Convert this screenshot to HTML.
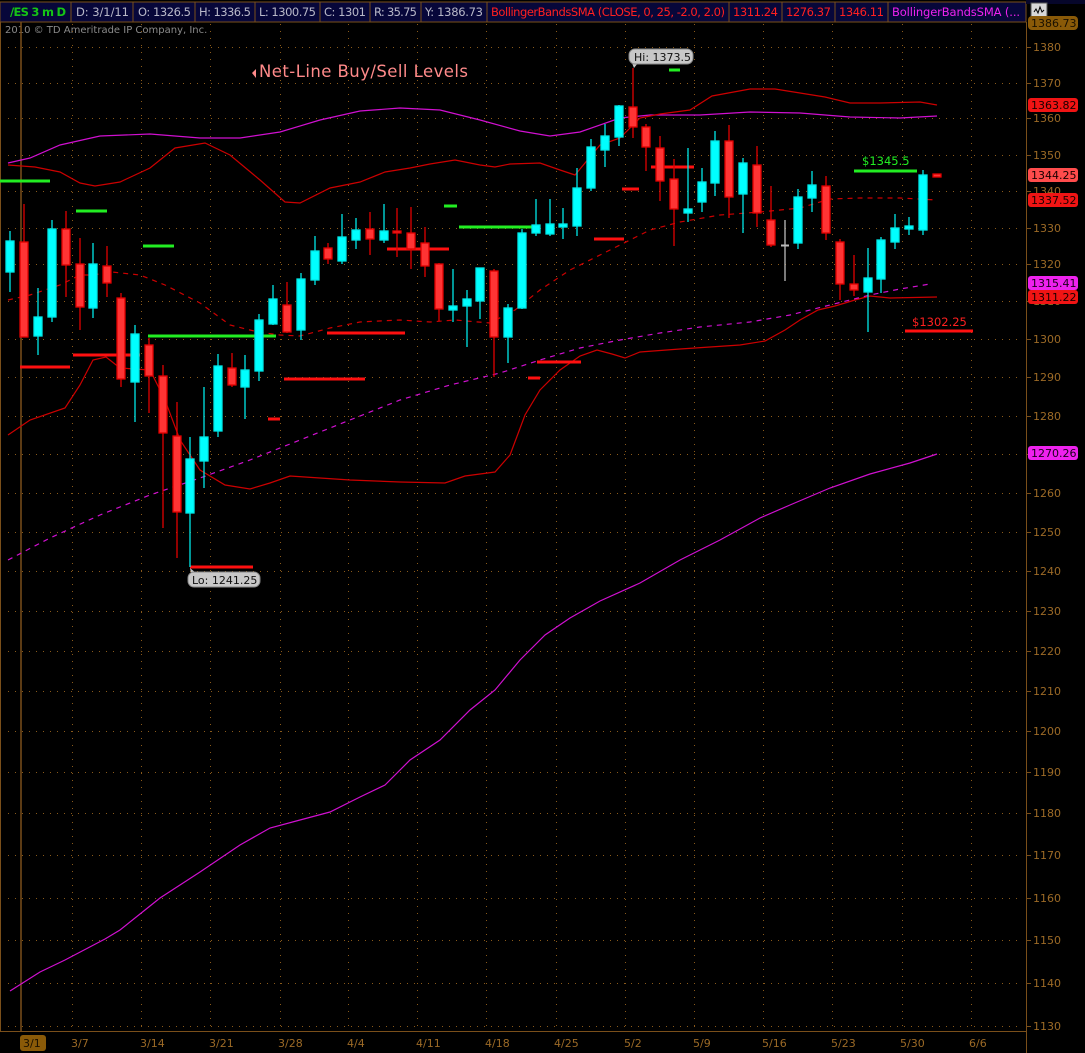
<!DOCTYPE html>
<html><head><meta charset="utf-8"><style>
html,body{margin:0;padding:0;background:#000;width:1085px;height:1053px;overflow:hidden}
svg{display:block}
text{font-family:"DejaVu Sans","Liberation Sans",sans-serif}
</style></head><body>
<svg width="1085" height="1053" viewBox="0 0 1085 1053" xmlns="http://www.w3.org/2000/svg">
<rect width="1085" height="1053" fill="#000"/>
<!-- header -->
<rect x="0" y="2" width="1026" height="20" fill="#07073a" stroke="#7a4f1a" stroke-width="1"/>
<g stroke="#7a4f1a" stroke-width="1">
<line x1="71" y1="2" x2="71" y2="22"/><line x1="133" y1="2" x2="133" y2="22"/><line x1="195" y1="2" x2="195" y2="22"/><line x1="255" y1="2" x2="255" y2="22"/><line x1="320" y1="2" x2="320" y2="22"/><line x1="370" y1="2" x2="370" y2="22"/><line x1="421" y1="2" x2="421" y2="22"/><line x1="487" y1="2" x2="487" y2="22"/><line x1="729" y1="2" x2="729" y2="22"/><line x1="782" y1="2" x2="782" y2="22"/><line x1="835" y1="2" x2="835" y2="22"/><line x1="888" y1="2" x2="888" y2="22"/>
</g>
<g font-size="11.5">
<text x="10" y="16" fill="#16c416" font-weight="bold" textLength="56">/ES 3 m D</text>
<text x="76" y="16" fill="#b8b8c8" textLength="53">D: 3/1/11</text>
<text x="138" y="16" fill="#b8b8c8" textLength="53">O: 1326.5</text>
<text x="199" y="16" fill="#b8b8c8" textLength="52">H: 1336.5</text>
<text x="259" y="16" fill="#b8b8c8" textLength="57">L: 1300.75</text>
<text x="324" y="16" fill="#b8b8c8" textLength="42">C: 1301</text>
<text x="374" y="16" fill="#b8b8c8" textLength="43">R: 35.75</text>
<text x="425" y="16" fill="#b8b8c8" textLength="58">Y: 1386.73</text>
<text x="491" y="16" fill="#ff2020" textLength="234">BollingerBandsSMA (CLOSE, 0, 25, -2.0, 2.0)</text>
<text x="733" y="16" fill="#ff2020" textLength="45">1311.24</text>
<text x="786" y="16" fill="#ff2020" textLength="45">1276.37</text>
<text x="839" y="16" fill="#ff2020" textLength="45">1346.11</text>
<text x="892" y="16" fill="#ee22ee" textLength="128">BollingerBandsSMA (...</text>
</g>
<rect x="1026" y="0" width="59" height="4" fill="#06062a"/>
<rect x="1031" y="3" width="16" height="14" fill="#d8d8d8" stroke="#555"/>
<polyline points="1034,12 1036,9 1038,13 1040,7 1042,12 1044,10" fill="none" stroke="#000" stroke-width="1"/>
<text x="5" y="33" font-size="10" fill="#8a8a8a">2010 © TD Ameritrade IP Company, Inc.</text>
<!-- frame -->
<line x1="0.5" y1="22" x2="0.5" y2="1031" stroke="#7a4f1a"/>
<line x1="21" y1="22" x2="21" y2="1031" stroke="#7a4f1a" stroke-width="1.5"/>
<line x1="1026.5" y1="22" x2="1026.5" y2="1053" stroke="#7a4f1a"/>
<line x1="0" y1="1031.5" x2="1026" y2="1031.5" stroke="#7a4f1a"/>
<!-- grid -->
<g stroke="#8a5a1a" stroke-width="1" stroke-dasharray="1,6">
<line x1="8" y1="47.5" x2="1020" y2="47.5"/><line x1="8" y1="83.5" x2="1020" y2="83.5"/><line x1="8" y1="118.5" x2="1020" y2="118.5"/><line x1="8" y1="155.5" x2="1020" y2="155.5"/><line x1="8" y1="191.5" x2="1020" y2="191.5"/><line x1="8" y1="228.5" x2="1020" y2="228.5"/><line x1="8" y1="264.5" x2="1020" y2="264.5"/><line x1="8" y1="301.5" x2="1020" y2="301.5"/><line x1="8" y1="339.5" x2="1020" y2="339.5"/><line x1="8" y1="377.5" x2="1020" y2="377.5"/><line x1="8" y1="416.5" x2="1020" y2="416.5"/><line x1="8" y1="454.5" x2="1020" y2="454.5"/><line x1="8" y1="493.5" x2="1020" y2="493.5"/><line x1="8" y1="532.5" x2="1020" y2="532.5"/><line x1="8" y1="571.5" x2="1020" y2="571.5"/><line x1="8" y1="611.5" x2="1020" y2="611.5"/><line x1="8" y1="651.5" x2="1020" y2="651.5"/><line x1="8" y1="691.5" x2="1020" y2="691.5"/><line x1="8" y1="731.5" x2="1020" y2="731.5"/><line x1="8" y1="772.5" x2="1020" y2="772.5"/><line x1="8" y1="813.5" x2="1020" y2="813.5"/><line x1="8" y1="855.5" x2="1020" y2="855.5"/><line x1="8" y1="898.5" x2="1020" y2="898.5"/><line x1="8" y1="940.5" x2="1020" y2="940.5"/><line x1="8" y1="983.5" x2="1020" y2="983.5"/><line x1="8" y1="1026.5" x2="1020" y2="1026.5"/>
<line x1="72.5" y1="24" x2="72.5" y2="1030"/><line x1="141.5" y1="24" x2="141.5" y2="1030"/><line x1="210.5" y1="24" x2="210.5" y2="1030"/><line x1="280.5" y1="24" x2="280.5" y2="1030"/><line x1="348.5" y1="24" x2="348.5" y2="1030"/><line x1="417.5" y1="24" x2="417.5" y2="1030"/><line x1="486.5" y1="24" x2="486.5" y2="1030"/><line x1="556.5" y1="24" x2="556.5" y2="1030"/><line x1="625.5" y1="24" x2="625.5" y2="1030"/><line x1="694.5" y1="24" x2="694.5" y2="1030"/><line x1="763.5" y1="24" x2="763.5" y2="1030"/><line x1="832.5" y1="24" x2="832.5" y2="1030"/><line x1="902.5" y1="24" x2="902.5" y2="1030"/><line x1="971.5" y1="24" x2="971.5" y2="1030"/>
</g>
<!-- right axis ticks & labels -->
<g stroke="#7a4f1a"><line x1="1026" y1="47.5" x2="1031" y2="47.5"/><line x1="1026" y1="83.5" x2="1031" y2="83.5"/><line x1="1026" y1="118.5" x2="1031" y2="118.5"/><line x1="1026" y1="155.5" x2="1031" y2="155.5"/><line x1="1026" y1="191.5" x2="1031" y2="191.5"/><line x1="1026" y1="228.5" x2="1031" y2="228.5"/><line x1="1026" y1="264.5" x2="1031" y2="264.5"/><line x1="1026" y1="301.5" x2="1031" y2="301.5"/><line x1="1026" y1="339.5" x2="1031" y2="339.5"/><line x1="1026" y1="377.5" x2="1031" y2="377.5"/><line x1="1026" y1="416.5" x2="1031" y2="416.5"/><line x1="1026" y1="454.5" x2="1031" y2="454.5"/><line x1="1026" y1="493.5" x2="1031" y2="493.5"/><line x1="1026" y1="532.5" x2="1031" y2="532.5"/><line x1="1026" y1="571.5" x2="1031" y2="571.5"/><line x1="1026" y1="611.5" x2="1031" y2="611.5"/><line x1="1026" y1="651.5" x2="1031" y2="651.5"/><line x1="1026" y1="691.5" x2="1031" y2="691.5"/><line x1="1026" y1="731.5" x2="1031" y2="731.5"/><line x1="1026" y1="772.5" x2="1031" y2="772.5"/><line x1="1026" y1="813.5" x2="1031" y2="813.5"/><line x1="1026" y1="855.5" x2="1031" y2="855.5"/><line x1="1026" y1="898.5" x2="1031" y2="898.5"/><line x1="1026" y1="940.5" x2="1031" y2="940.5"/><line x1="1026" y1="983.5" x2="1031" y2="983.5"/><line x1="1026" y1="1026.5" x2="1031" y2="1026.5"/></g>
<g font-size="11" fill="#9c6a26">
<text x="1033" y="51">1380</text><text x="1033" y="87">1370</text><text x="1033" y="122">1360</text><text x="1033" y="159">1350</text><text x="1033" y="195">1340</text><text x="1033" y="232">1330</text><text x="1033" y="268">1320</text><text x="1033" y="305">1310</text><text x="1033" y="343">1300</text><text x="1033" y="381">1290</text><text x="1033" y="420">1280</text><text x="1033" y="458">1270</text><text x="1033" y="497">1260</text><text x="1033" y="536">1250</text><text x="1033" y="575">1240</text><text x="1033" y="615">1230</text><text x="1033" y="655">1220</text><text x="1033" y="695">1210</text><text x="1033" y="735">1200</text><text x="1033" y="776">1190</text><text x="1033" y="817">1180</text><text x="1033" y="859">1170</text><text x="1033" y="902">1160</text><text x="1033" y="944">1150</text><text x="1033" y="987">1140</text><text x="1033" y="1030">1130</text>
</g>
<g font-size="11">
<rect x="1028" y="16" width="50" height="14" rx="4" fill="#8a5a08"/><text x="1031" y="27" fill="#1a1000">1386.73</text>
<rect x="1028" y="98" width="50" height="14" rx="3" fill="#f01414"/><text x="1031" y="109" fill="#1a0000">1363.82</text>
<rect x="1028" y="168" width="50" height="14" rx="3" fill="#ff4c4c"/><text x="1031" y="179" fill="#1a0000">1344.25</text>
<rect x="1028" y="193" width="50" height="14" rx="3" fill="#f01414"/><text x="1031" y="204" fill="#1a0000">1337.52</text>
<rect x="1028" y="276" width="50" height="14" rx="3" fill="#ee22ee"/><text x="1031" y="287" fill="#1a001a">1315.41</text>
<rect x="1028" y="290" width="50" height="14" rx="3" fill="#f01414"/><text x="1031" y="301" fill="#1a0000">1311.22</text>
<rect x="1028" y="446" width="50" height="14" rx="3" fill="#ee22ee"/><text x="1031" y="457" fill="#1a001a">1270.26</text>
</g>
<!-- dates -->
<rect x="20" y="1035" width="26" height="16" rx="3" fill="#8a5a08"/>
<g font-size="11" fill="#9c6a26">
<text x="23" y="1047" fill="#1a1000">3/1</text>
<text x="71" y="1047">3/7</text><text x="140" y="1047">3/14</text><text x="209" y="1047">3/21</text><text x="278" y="1047">3/28</text><text x="347" y="1047">4/4</text><text x="416" y="1047">4/11</text><text x="485" y="1047">4/18</text><text x="554" y="1047">4/25</text><text x="624" y="1047">5/2</text><text x="693" y="1047">5/9</text><text x="762" y="1047">5/16</text><text x="831" y="1047">5/23</text><text x="900" y="1047">5/30</text><text x="969" y="1047">6/6</text>
</g>
<!-- study lines -->
<g fill="none" stroke-width="1.2">
<polyline stroke="#d010d0" points="8,163 30,158 60,145 100,136 150,134 200,138 240,138 280,132 320,120 360,111 400,108 440,110 480,120 520,131 550,136 580,132 620,118 650,115 700,115 750,112 800,113 850,117 900,118 937,116"/>
<polyline stroke="#cc0000" points="8,165 35,167 60,172 80,183 95,186 120,182 150,168 175,148 205,143 230,155 260,180 285,202 300,203 330,188 360,182 385,172 410,168 430,164 455,160 480,165 495,167 510,164 540,163 560,170 575,175 600,145 620,138 640,118 660,114 690,110 712,96 750,89 775,89 800,93 825,97 850,103 880,103 920,102 937,105"/>
<polyline stroke="#cc0000" points="8,435 30,420 65,408 80,385 93,360 106,357 120,368 150,370 165,400 180,440 200,470 225,485 250,489 270,483 290,476 350,480 400,482 445,483 465,476 495,472 510,455 525,415 540,390 560,370 580,356 597,350 612,354 625,358 640,352 680,349 740,345 765,341 785,330 800,320 818,310 835,306 855,300 870,296 890,298 937,297"/>
<polyline stroke="#cc0000" stroke-dasharray="5,5" points="8,300 30,295 60,285 80,275 93,275 112,272 140,275 165,285 200,303 230,325 258,332 280,335 300,336 330,328 360,322 400,320 430,322 455,320 490,323 515,310 540,290 570,270 600,255 630,240 650,230 680,222 720,215 760,212 800,208 830,199 860,198 900,198 937,200"/>
<polyline stroke="#d010d0" stroke-dasharray="5,5" points="8,560 50,538 100,515 150,495 200,478 250,460 300,440 350,420 400,400 450,385 500,373 540,360 580,348 620,340 660,333 700,327 750,322 790,315 830,305 870,295 900,289 930,284"/>
<polyline stroke="#d010d0" points="10,991 40,972 65,960 105,939 120,930 140,914 160,898 200,872 240,845 270,828 300,820 330,812 360,797 385,785 410,760 440,740 470,710 495,690 520,660 545,635 570,618 600,601 640,583 680,560 720,540 760,518 790,505 830,488 870,474 910,463 937,454"/>
</g>
<!-- level lines -->
<g stroke-width="3">
<g stroke="#22ee22"><line x1="0" y1="181" x2="50" y2="181"/><line x1="76" y1="211" x2="107" y2="211"/><line x1="143" y1="246" x2="174" y2="246"/><line x1="148" y1="336" x2="276" y2="336"/><line x1="444" y1="206" x2="457" y2="206"/><line x1="459" y1="227" x2="536" y2="227"/><line x1="669" y1="70" x2="680" y2="70"/><line x1="854" y1="171" x2="917" y2="171"/></g>
<g stroke="#ff1010"><line x1="20" y1="367" x2="70" y2="367"/><line x1="73" y1="355" x2="140" y2="355"/><line x1="284" y1="379" x2="365" y2="379"/><line x1="268" y1="419" x2="280" y2="419"/><line x1="327" y1="333" x2="405" y2="333"/><line x1="387" y1="249" x2="449" y2="249"/><line x1="528" y1="378" x2="540" y2="378"/><line x1="537" y1="362" x2="581" y2="362"/><line x1="594" y1="239" x2="624" y2="239"/><line x1="622" y1="189" x2="639" y2="189"/><line x1="651" y1="167" x2="694" y2="167"/><line x1="190" y1="567" x2="253" y2="567"/><line x1="905" y1="331" x2="973" y2="331"/></g>
</g>
<!-- candles -->
<g stroke-width="1.3">
<g stroke="#00e8e8" fill="#00ffff">
<line x1="10" y1="231" x2="10" y2="292"/><rect x="6" y="241" width="8" height="31"/>
<line x1="38" y1="288" x2="38" y2="355"/><rect x="34" y="317" width="8" height="19"/>
<line x1="52" y1="220" x2="52" y2="322"/><rect x="48" y="229" width="8" height="88"/>
<line x1="93" y1="243" x2="93" y2="318"/><rect x="89" y="264" width="8" height="44"/>
<line x1="135" y1="325" x2="135" y2="422"/><rect x="131" y="334" width="8" height="48"/>
<line x1="190" y1="437" x2="190" y2="567"/><rect x="186" y="459" width="8" height="54"/>
<line x1="204" y1="387" x2="204" y2="488"/><rect x="200" y="437" width="8" height="24"/>
<line x1="218" y1="354" x2="218" y2="437"/><rect x="214" y="366" width="8" height="65"/>
<line x1="245" y1="355" x2="245" y2="419"/><rect x="241" y="370" width="8" height="17"/>
<line x1="259" y1="314" x2="259" y2="381"/><rect x="255" y="320" width="8" height="51"/>
<line x1="273" y1="285" x2="273" y2="325"/><rect x="269" y="299" width="8" height="25"/>
<line x1="301" y1="273" x2="301" y2="340"/><rect x="297" y="279" width="8" height="51"/>
<line x1="315" y1="236" x2="315" y2="285"/><rect x="311" y="251" width="8" height="29"/>
<line x1="342" y1="214" x2="342" y2="264"/><rect x="338" y="237" width="8" height="24"/>
<line x1="356" y1="218" x2="356" y2="249"/><rect x="352" y="230" width="8" height="10"/>
<line x1="384" y1="204" x2="384" y2="243"/><rect x="380" y="231" width="8" height="9"/>
<line x1="453" y1="269" x2="453" y2="322"/><rect x="449" y="306" width="8" height="4"/>
<line x1="467" y1="290" x2="467" y2="347"/><rect x="463" y="299" width="8" height="7"/>
<line x1="480" y1="268" x2="480" y2="319"/><rect x="476" y="268" width="8" height="33"/>
<line x1="508" y1="304" x2="508" y2="363"/><rect x="504" y="308" width="8" height="29"/>
<line x1="522" y1="229" x2="522" y2="309"/><rect x="518" y="233" width="8" height="75"/>
<line x1="536" y1="199" x2="536" y2="236"/><rect x="532" y="225" width="8" height="8"/>
<line x1="550" y1="199" x2="550" y2="236"/><rect x="546" y="224" width="8" height="10"/>
<line x1="563" y1="208" x2="563" y2="239"/><rect x="559" y="224" width="8" height="3"/>
<line x1="577" y1="168" x2="577" y2="236"/><rect x="573" y="188" width="8" height="38"/>
<line x1="591" y1="139" x2="591" y2="191"/><rect x="587" y="147" width="8" height="41"/>
<line x1="605" y1="124" x2="605" y2="167"/><rect x="601" y="136" width="8" height="14"/>
<line x1="619" y1="105" x2="619" y2="146"/><rect x="615" y="106" width="8" height="31"/>
<line x1="688" y1="148" x2="688" y2="222"/><rect x="684" y="209" width="8" height="4"/>
<line x1="702" y1="168" x2="702" y2="212"/><rect x="698" y="182" width="8" height="20"/>
<line x1="715" y1="131" x2="715" y2="196"/><rect x="711" y="141" width="8" height="42"/>
<line x1="743" y1="158" x2="743" y2="233"/><rect x="739" y="163" width="8" height="31"/>
<line x1="798" y1="189" x2="798" y2="249"/><rect x="794" y="197" width="8" height="46"/>
<line x1="812" y1="171" x2="812" y2="212"/><rect x="808" y="185" width="8" height="13"/>
<line x1="868" y1="248" x2="868" y2="332"/><rect x="864" y="278" width="8" height="14"/>
<line x1="881" y1="237" x2="881" y2="293"/><rect x="877" y="240" width="8" height="39"/>
<line x1="895" y1="214" x2="895" y2="249"/><rect x="891" y="228" width="8" height="14"/>
<line x1="909" y1="217" x2="909" y2="235"/><rect x="905" y="226" width="8" height="3"/>
<line x1="923" y1="170" x2="923" y2="235"/><rect x="919" y="175" width="8" height="55"/>
</g>
<g stroke="#e00000" fill="#ff3434">
<line x1="24" y1="204" x2="24" y2="337"/><rect x="20" y="242" width="8" height="95"/>
<line x1="66" y1="211" x2="66" y2="297"/><rect x="62" y="229" width="8" height="36"/>
<line x1="80" y1="238" x2="80" y2="330"/><rect x="76" y="264" width="8" height="43"/>
<line x1="107" y1="246" x2="107" y2="297"/><rect x="103" y="266" width="8" height="17"/>
<line x1="121" y1="293" x2="121" y2="387"/><rect x="117" y="298" width="8" height="81"/>
<line x1="149" y1="338" x2="149" y2="413"/><rect x="145" y="345" width="8" height="31"/>
<line x1="163" y1="365" x2="163" y2="528"/><rect x="159" y="376" width="8" height="57"/>
<line x1="177" y1="402" x2="177" y2="558"/><rect x="173" y="436" width="8" height="76"/>
<line x1="232" y1="353" x2="232" y2="387"/><rect x="228" y="368" width="8" height="17"/>
<line x1="287" y1="282" x2="287" y2="333"/><rect x="283" y="305" width="8" height="27"/>
<line x1="328" y1="243" x2="328" y2="264"/><rect x="324" y="248" width="8" height="11"/>
<line x1="370" y1="212" x2="370" y2="255"/><rect x="366" y="229" width="8" height="10"/>
<line x1="397" y1="208" x2="397" y2="257"/><rect x="393" y="231" width="8" height="2"/>
<line x1="411" y1="207" x2="411" y2="269"/><rect x="407" y="233" width="8" height="16"/>
<line x1="425" y1="227" x2="425" y2="277"/><rect x="421" y="243" width="8" height="23"/>
<line x1="439" y1="263" x2="439" y2="321"/><rect x="435" y="264" width="8" height="45"/>
<line x1="494" y1="269" x2="494" y2="377"/><rect x="490" y="271" width="8" height="66"/>
<line x1="633" y1="68" x2="633" y2="138"/><rect x="629" y="107" width="8" height="20"/>
<line x1="646" y1="124" x2="646" y2="171"/><rect x="642" y="127" width="8" height="20"/>
<line x1="660" y1="136" x2="660" y2="201"/><rect x="656" y="148" width="8" height="33"/>
<line x1="674" y1="159" x2="674" y2="246"/><rect x="670" y="179" width="8" height="30"/>
<line x1="729" y1="125" x2="729" y2="218"/><rect x="725" y="141" width="8" height="56"/>
<line x1="757" y1="146" x2="757" y2="227"/><rect x="753" y="165" width="8" height="48"/>
<line x1="771" y1="186" x2="771" y2="247"/><rect x="767" y="220" width="8" height="25"/>
<line x1="826" y1="176" x2="826" y2="240"/><rect x="822" y="186" width="8" height="47"/>
<line x1="840" y1="239" x2="840" y2="300"/><rect x="836" y="242" width="8" height="42"/>
<line x1="854" y1="255" x2="854" y2="296"/><rect x="850" y="284" width="8" height="6"/>
<rect x="933" y="174" width="8" height="3"/>
</g>
<line x1="785" y1="220" x2="785" y2="281" stroke="#bbb"/><line x1="781" y1="245.5" x2="789" y2="245.5" stroke="#bbb" stroke-width="2"/>
</g>
<!-- labels -->
<path d="M632,63 L634,68 L638,63 Z" fill="#c8c8c8"/>
<rect x="629" y="49" width="64" height="15" rx="6" fill="#c8c8c8" stroke="#888"/>
<text x="634" y="61" font-size="11" fill="#111">Hi: 1373.5</text>
<path d="M190,568 L191,573 L196,573 Z" fill="#c8c8c8"/>
<rect x="188" y="572" width="72" height="15" rx="6" fill="#c8c8c8" stroke="#888"/>
<text x="192" y="584" font-size="11" fill="#111">Lo: 1241.25</text>
<text x="862" y="165" font-size="11.5" fill="#22ee22">$1345.5</text>
<text x="912" y="326" font-size="11.5" fill="#ff2020">$1302.25</text>
<path d="M252,73 L256,69 L256,78 Z" fill="#ff8a8a"/>
<text x="259" y="77" font-size="16.5" fill="#ff8a8a" textLength="209">Net-Line Buy/Sell Levels</text>
</svg>
</body></html>
